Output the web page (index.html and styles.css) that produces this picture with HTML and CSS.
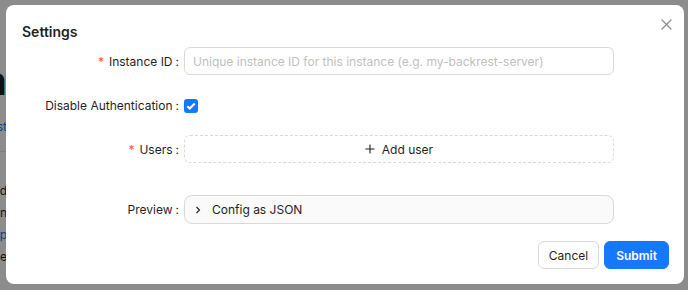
FILE: index.html
```html
<!DOCTYPE html>
<html lang="en">
<head>
    <meta charset="UTF-8">
    <meta name="viewport" content="width=device-width, initial-scale=1.0">
    <title>Settings</title>
    <link rel="stylesheet" href="styles.css">
</head>
<body>

<!-- Pagina sotto la maschera: se ne vede solo il bordo sinistro -->
<div class="page">
    <div class="page-edge">
        <h1 class="page-title">Backrest is a</h1>
        <a class="page-link">Learn more about backrest</a>
        <hr class="page-rule">
        <p class="page-line">Add a repository to get started</p>
        <p class="page-line">Configure a plan to begin</p>
        <p class="page-line page-blue">Open docs and help</p>
        <p class="page-line">Backups run on schedule</p>
    </div>
</div>
<div class="mask"></div>

<div class="modal">
    <button class="modal-close" aria-label="Close">
        <svg width="11" height="11" viewBox="0 0 11 11">
            <path d="M1 1L10 10M10 1L1 10" stroke="currentColor" stroke-width="1.3" fill="none" stroke-linecap="round"/>
        </svg>
    </button>

    <h2 class="modal-title">Settings</h2>

    <form class="form">
        <div class="form-row row-instance">
            <label class="form-label"><span class="req">*</span>Instance ID<span class="colon">:</span></label>
            <input class="form-input" type="text" placeholder="Unique instance ID for this instance (e.g. my-backrest-server)">
        </div>

        <div class="form-row row-auth">
            <label class="form-label">Disable Authentication<span class="colon">:</span></label>
            <div class="form-control">
                <span class="checkbox">
                    <svg width="10" height="8" viewBox="0 0 10 8">
                        <path d="M1.3 4.2L3.8 6.5L8.7 1.5" stroke="#fff" stroke-width="2" fill="none"/>
                    </svg>
                </span>
            </div>
        </div>

        <div class="form-row row-users">
            <label class="form-label"><span class="req">*</span>Users<span class="colon">:</span></label>
            <button type="button" class="dashed-button">
                <svg width="10" height="10" viewBox="0 0 10 10">
                    <path d="M5 0.5V9.5M0.5 5H9.5" stroke="#1f1f1f" stroke-width="1.1" fill="none"/>
                </svg>
                Add user
            </button>
        </div>

        <div class="form-row row-preview">
            <label class="form-label">Preview<span class="colon">:</span></label>
            <div class="collapse">
                <svg width="8" height="8" viewBox="0 0 8 8">
                    <path d="M2.5 1L5.5 4L2.5 7" stroke="#1f1f1f" stroke-width="1.1" fill="none"/>
                </svg>
                <span>Config as JSON</span>
            </div>
        </div>
    </form>

    <div class="modal-footer">
        <button class="btn btn-default">Cancel</button>
        <button class="btn btn-primary">Submit</button>
    </div>
</div>

</body>
</html>
```

FILE: styles.css
```css
body {
    margin: 0;
    width: 688px;
    height: 290px;
    overflow: hidden;
    font-family: Inter, "Noto Sans", sans-serif;
    font-size: 12px;
    color: #1f1f1f;
    background-color: #ffffff;
}
.page {
    padding-top: 60px;
}
.page-edge {
    width: 7px;
    overflow: hidden;
    display: flex;
    flex-direction: column;
    align-items: flex-end;
}
.page-title {
    margin: 0;
    font-size: 40px;
    line-height: 42px;
    font-weight: 600;
    white-space: nowrap;
}
.page-link {
    margin-top: 16px;
    color: #1677ff;
    white-space: nowrap;
    line-height: 18px;
}
.page-rule {
    align-self: stretch;
    width: 7px;
    margin: 15px 0 0;
    border: none;
    border-top: 1px solid #e6e6e6;
}
.page-line {
    margin: 0;
    white-space: nowrap;
    line-height: 22px;
}
.page-line:first-of-type {
    margin-top: 28px;
}
.page-blue {
    color: #1677ff;
}
.mask {
    position: fixed;
    inset: 0;
    background-color: rgba(0, 0, 0, 0.45);
}
.modal {
    position: absolute;
    left: 6px;
    top: 5px;
    width: 678px;
    height: 279px;
    box-sizing: border-box;
    padding: 17px 15px 15px 16px;
    background-color: #ffffff;
    border-radius: 8px;
    display: flex;
    flex-direction: column;
}
.modal-close {
    position: absolute;
    top: 8px;
    right: 7px;
    width: 22px;
    height: 22px;
    padding: 0;
    border: none;
    background: none;
    color: #8c8c8c;
    display: flex;
    align-items: center;
    justify-content: center;
}
.modal-title {
    margin: 0;
    font-size: 14px;
    line-height: 20px;
    font-weight: 600;
}
.form {
    margin-top: 5px;
    display: flex;
    flex-direction: column;
}
.form-row {
    display: grid;
    grid-template-columns: 162px 430px;
    align-items: center;
    height: 28px;
}
.row-auth, .row-users {
    margin-top: 16px;
}
.row-preview {
    margin-top: 32px;
    height: 29px;
}
.form-label {
    text-align: right;
    padding-right: 5px;
    white-space: nowrap;
}
.colon {
    margin-left: 3px;
}
.req {
    color: #ff4d4f;
    margin-right: 5px;
}
.form-input {
    height: 28px;
    box-sizing: border-box;
    border: 1px solid #d9d9d9;
    border-radius: 6px;
    padding: 0 8px;
    font-family: inherit;
    font-size: 12px;
    color: #1f1f1f;
}
.form-input::placeholder {
    color: #bfbfbf;
}
.form-control {
    display: flex;
    align-items: center;
}
.checkbox {
    width: 14px;
    height: 14px;
    border-radius: 3px;
    background-color: #1677ff;
    display: flex;
    align-items: center;
    justify-content: center;
    margin-top: 1px;
}
.dashed-button {
    height: 28px;
    border: 1px dashed #d9d9d9;
    border-radius: 6px;
    background-color: #ffffff;
    font-family: inherit;
    font-size: 12px;
    color: #1f1f1f;
    display: flex;
    align-items: center;
    justify-content: center;
    gap: 7px;
}
.collapse {
    height: 29px;
    box-sizing: border-box;
    border: 1px solid #d9d9d9;
    border-radius: 8px;
    background-color: #fafafa;
    display: flex;
    align-items: center;
    gap: 10px;
    padding-left: 9px;
}
.modal-footer {
    margin-top: auto;
    display: flex;
    justify-content: flex-end;
    gap: 5px;
}
.btn {
    height: 28px;
    border-radius: 6px;
    font-family: inherit;
    font-size: 12px;
    padding: 0 10px;
}
.btn-default {
    background-color: #ffffff;
    border: 1px solid #d9d9d9;
    color: #1f1f1f;
}
.btn-primary {
    background-color: #1677ff;
    border: 1px solid #1677ff;
    color: #ffffff;
    font-weight: 600;
    padding: 0 11px;
}
```
